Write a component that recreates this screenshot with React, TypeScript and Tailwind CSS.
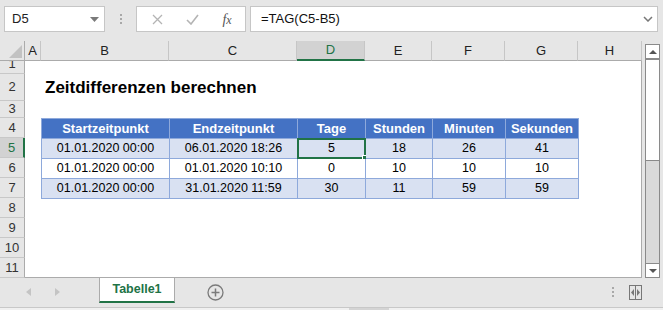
import React from "react";

const colHeads = [
  { l: "A", w: "w-[16px]" },
  { l: "B", w: "w-[128px]" },
  { l: "C", w: "w-[128px]" },
  { l: "D", w: "w-[68px]", sel: true },
  { l: "E", w: "w-[67px]" },
  { l: "F", w: "w-[73px]" },
  { l: "G", w: "w-[73px]" },
  { l: "H", w: "w-[64px]" },
];

const rowHeads = [
  { n: 1, h: "h-[13px]" },
  { n: 2, h: "h-[27px]" },
  { n: 3, h: "h-[17px]" },
  { n: 4, h: "h-[20px]" },
  { n: 5, h: "h-[20px]", sel: true },
  { n: 6, h: "h-[20px]" },
  { n: 7, h: "h-[20px]" },
  { n: 8, h: "h-[20px]" },
  { n: 9, h: "h-[20px]" },
  { n: 10, h: "h-[20px]" },
  { n: 11, h: "h-[20px]" },
];

const tableCols = ["w-[128px]", "w-[128px]", "w-[68px]", "w-[67px]", "w-[73px]", "w-[73px]"];
const headers = ["Startzeitpunkt", "Endzeitpunkt", "Tage", "Stunden", "Minuten", "Sekunden"];
const rows = [
  ["01.01.2020 00:00", "06.01.2020 18:26", "5", "18", "26", "41"],
  ["01.01.2020 00:00", "01.01.2020 10:10", "0", "10", "10", "10"],
  ["01.01.2020 00:00", "31.01.2020 11:59", "30", "11", "59", "59"],
];

function TopBar() {
  return (
    <div className="flex h-[41px] items-start pt-[6px] pl-[4px] pr-[5px]">
      <div className="flex h-[26px] w-[101px] items-center justify-between border border-[#c6c6c6] bg-white pl-[7px] pr-[5px]">
        <span className="text-[13px] text-[#222]">D5</span>
        <svg width="9" height="5" viewBox="0 0 9 5">
          <polygon points="0,0 9,0 4.5,5" fill="#7a7a7a" />
        </svg>
      </div>
      <div className="flex h-[26px] w-[31px] flex-col items-center justify-center gap-[2px]">
        <span className="h-[2px] w-[2px] bg-[#a8a8a8]" />
        <span className="h-[2px] w-[2px] bg-[#a8a8a8]" />
        <span className="h-[2px] w-[2px] bg-[#a8a8a8]" />
      </div>
      <div className="flex h-[26px] w-[110px] items-center border border-[#c6c6c6] bg-white">
        <div className="flex w-[38px] justify-center pl-[2px]">
          <svg width="11" height="11" viewBox="0 0 11 11">
            <path d="M1 1 L10 10 M10 1 L1 10" stroke="#b4b4b4" strokeWidth="1.3" />
          </svg>
        </div>
        <div className="flex w-[34px] justify-center">
          <svg width="13" height="11" viewBox="0 0 13 11">
            <path d="M1 6 L5 10 L12 1" stroke="#b4b4b4" strokeWidth="1.6" fill="none" />
          </svg>
        </div>
        <div className="flex w-[36px] justify-center">
          <span className="font-['Liberation_Serif',serif] text-[14px] italic text-[#555]">
            f<span className="text-[12px]">x</span>
          </span>
        </div>
      </div>
      <div className="ml-[4px] flex h-[26px] flex-1 items-center justify-between border border-[#c6c6c6] bg-white pl-[10px] pr-[4px]">
        <span className="text-[13px] text-[#111]">=TAG(C5-B5)</span>
        <svg width="10" height="6" viewBox="0 0 10 6">
          <path d="M1 1 L5 5 L9 1" stroke="#777" strokeWidth="1.5" fill="none" />
        </svg>
      </div>
    </div>
  );
}

function HeaderRow() {
  return (
    <div className="flex h-[20px]">
      <div className="relative h-[20px] w-[25px] border-r border-b border-[#ababab]">
        <svg className="absolute left-[9px] top-[4px]" width="13" height="13" viewBox="0 0 13 13">
          <polygon points="13,0 13,13 0,13" fill="#c2c2c2" />
        </svg>
      </div>
      {colHeads.map((c) => (
        <div
          key={c.l}
          className={
            c.sel
              ? `${c.w} flex h-[20px] items-center justify-center border-r border-[#c6c6c6] border-b-2 border-b-[#217346] bg-[#d2d2d2] text-[13px] text-[#217346]`
              : `${c.w} flex h-[20px] items-center justify-center border-r border-[#c6c6c6] border-b border-b-[#ababab] text-[13px] text-[#222]`
          }
        >
          {c.l}
        </div>
      ))}
    </div>
  );
}

function RowHeaders() {
  return (
    <div className="flex w-[25px] flex-col">
      {rowHeads.map((r) =>
        r.n === 1 ? (
          <div key={r.n} className={`${r.h} overflow-hidden border-r border-b border-[#ababab] border-b-[#c8c8c8]`}>
            <div className="-mt-[7px] flex h-[20px] items-center justify-center text-[13px] text-[#333]">1</div>
          </div>
        ) : (
          <div
            key={r.n}
            className={
              r.sel
                ? `${r.h} flex items-center justify-center border-b border-b-[#c8c8c8] border-r-2 border-r-[#217346] bg-[#d2d2d2] text-[13px] text-[#217346]`
                : `${r.h} flex items-center justify-center border-b border-b-[#c8c8c8] border-r border-r-[#ababab] text-[13px] text-[#333]`
            }
          >
            {r.n}
          </div>
        )
      )}
      <div className="flex-1 border-r border-[#ababab]" />
    </div>
  );
}

function Table() {
  return (
    <div className="ml-[16px] flex w-fit flex-col border-l border-t border-[#8ea9db]">
      <div className="flex h-[20px]">
        {headers.map((h, i) => (
          <div
            key={h}
            className={`${tableCols[i]} flex h-[20px] items-center justify-center border-r border-b border-[#8ea9db] bg-[#4472c4] text-[13px] font-bold text-white`}
          >
            {h}
          </div>
        ))}
      </div>
      {rows.map((row, ri) => (
        <div key={ri} className="flex h-[20px]">
          {row.map((v, ci) => (
            <div
              key={ci}
              className={
                ri === 1
                  ? `${tableCols[ci]} relative flex h-[20px] items-center justify-center border-r border-b border-[#8ea9db] bg-white text-[12.5px] text-black`
                  : `${tableCols[ci]} relative flex h-[20px] items-center justify-center border-r border-b border-[#8ea9db] bg-[#d9e1f2] text-[12.5px] text-black`
              }
            >
              {v}
              {ri === 0 && ci === 2 && (
                <div className="pointer-events-none absolute -left-[1px] -top-[1px] -right-[1px] -bottom-[1px] border-2 border-[#217346]">
                  <div className="absolute -bottom-[4px] -right-[4px] h-[6px] w-[6px] border border-white bg-[#217346]" />
                </div>
              )}
            </div>
          ))}
        </div>
      ))}
    </div>
  );
}

function Sheet() {
  return (
    <div className="flex w-[617px] flex-col border-r border-b border-[#ababab] bg-white">
      <div className="h-[13px]" />
      <div className="flex h-[27px] items-center pl-[20px] pt-[1px]">
        <span className="text-[17px] font-bold text-black">Zeitdifferenzen berechnen</span>
      </div>
      <div className="h-[17px]" />
      <Table />
    </div>
  );
}

function ScrollBar() {
  return (
    <div className="flex w-[21px] flex-col pl-[3px] pr-[3px] pt-[3px]">
      <div className="flex h-full flex-col border border-[#8a8a8a] bg-white">
        <div className="flex h-[13px] items-center justify-center">
          <svg width="8" height="4" viewBox="0 0 8 4">
            <polygon points="0,4 8,4 4,0" fill="#555" />
          </svg>
        </div>
        <div className="h-[103px] border-t-2 border-b border-[#8a8a8a] bg-white" />
        <div className="flex-1 bg-[#dadada]" />
        <div className="flex h-[14px] items-center justify-center border-t border-[#8a8a8a]">
          <svg width="8" height="4" viewBox="0 0 8 4">
            <polygon points="0,0 8,0 4,4" fill="#555" />
          </svg>
        </div>
      </div>
    </div>
  );
}

function TabBar() {
  return (
    <div className="flex h-[29px] items-start">
      <div className="flex h-[28px] w-[99px] items-center">
        <svg className="ml-[26px]" width="5" height="8" viewBox="0 0 5 8">
          <polygon points="5,0 5,8 0,4" fill="#c4c4c4" />
        </svg>
        <svg className="ml-[24px]" width="5" height="8" viewBox="0 0 5 8">
          <polygon points="0,0 0,8 5,4" fill="#c4c4c4" />
        </svg>
      </div>
      <div className="flex h-[25px] w-[76px] items-center justify-center border-x border-[#ababab] border-b-2 border-b-[#217346] bg-white">
        <span className="text-[12.5px] font-bold text-[#217346]">Tabelle1</span>
      </div>
      <div className="flex h-[28px] w-[82px] items-center justify-center pr-[2px]">
        <svg width="17" height="17" viewBox="0 0 17 17">
          <circle cx="8.5" cy="8.5" r="7.5" stroke="#7a7a7a" strokeWidth="1.3" fill="none" />
          <path d="M8.5 4.5 V12.5 M4.5 8.5 H12.5" stroke="#7a7a7a" strokeWidth="1.5" />
        </svg>
      </div>
      <div className="flex-1" />
      <div className="flex h-[28px] flex-col items-center justify-center gap-[2px]">
        <span className="h-[2px] w-[2px] bg-[#a8a8a8]" />
        <span className="h-[2px] w-[2px] bg-[#a8a8a8]" />
        <span className="h-[2px] w-[2px] bg-[#a8a8a8]" />
      </div>
      <div className="ml-[15px] mr-[21px] flex h-[28px] items-center">
        <svg width="13" height="15" viewBox="0 0 13 15">
          <rect x="0.5" y="0.5" width="12" height="14" stroke="#777" fill="none" />
          <path d="M6.5 0.5 V14.5" stroke="#777" />
          <polygon points="5,4 5,11 2,7.5" fill="#777" />
          <polygon points="8,4 8,11 11,7.5" fill="#777" />
        </svg>
      </div>
    </div>
  );
}

export default function App() {
  return (
    <div className="h-[310px] w-[663px] overflow-hidden bg-[#e6e6e6] font-['Liberation_Sans',Arial,sans-serif]">
      <TopBar />
      <div className="flex h-[237px]">
        <div className="flex w-[642px] flex-col">
          <HeaderRow />
          <div className="flex flex-1">
            <RowHeaders />
            <Sheet />
          </div>
        </div>
        <ScrollBar />
      </div>
      <TabBar />
      <div className="flex h-[3px] border-t border-[#c8c8c8] bg-[#f0f0f0]">
        <div className="ml-[349px] h-full w-[40px] bg-[#d4d4d4]" />
      </div>
    </div>
  );
}
